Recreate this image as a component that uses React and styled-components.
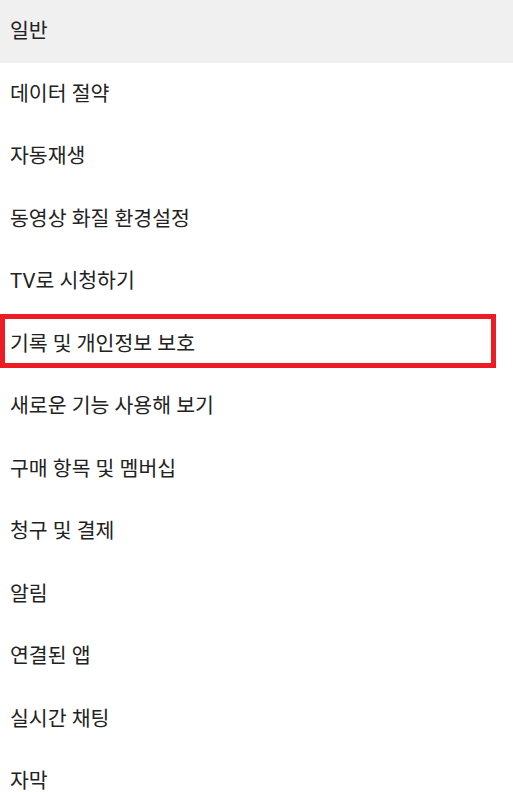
import React from 'react';
import styled, { createGlobalStyle } from 'styled-components';

const GlobalStyle = createGlobalStyle`
    html, body {
        margin: 0;
        padding: 0;
        background: #ffffff;
    }
    body {
        font-family: Roboto, "Noto Sans CJK KR", sans-serif;
        width: 513px;
        overflow: hidden;
    }
`;

const SettingsList = styled.ul`
    list-style: none;
    margin: 0;
    padding: 0;
    display: flex;
    flex-direction: column;
`;

const SettingsItem = styled.li`
    position: relative;
    height: 62.5px;
    display: flex;
    align-items: center;
    padding-left: 10px;
    background: ${props => (props.active ? '#f0f0f0' : '#ffffff')};
    color: #222222;
    font-size: 20.5px;
    line-height: 1;

    ${props => props.highlighted && `
        &::after {
            content: '';
            position: absolute;
            left: 0;
            top: 1.5px;
            width: 496px;
            height: 54px;
            box-sizing: border-box;
            border: 5px solid #ed1c24;
            pointer-events: none;
        }
    `}
`;

const items = [
    '일반',
    '데이터 절약',
    '자동재생',
    '동영상 화질 환경설정',
    'TV로 시청하기',
    '기록 및 개인정보 보호',
    '새로운 기능 사용해 보기',
    '구매 항목 및 멤버십',
    '청구 및 결제',
    '알림',
    '연결된 앱',
    '실시간 채팅',
    '자막',
];

function App() {
    return (
        <>
            <GlobalStyle />
            <SettingsList>
                {items.map((label, i) => (
                    <SettingsItem key={label} active={i === 0} highlighted={i === 5}>
                        {label}
                    </SettingsItem>
                ))}
            </SettingsList>
        </>
    );
}

export default App;
